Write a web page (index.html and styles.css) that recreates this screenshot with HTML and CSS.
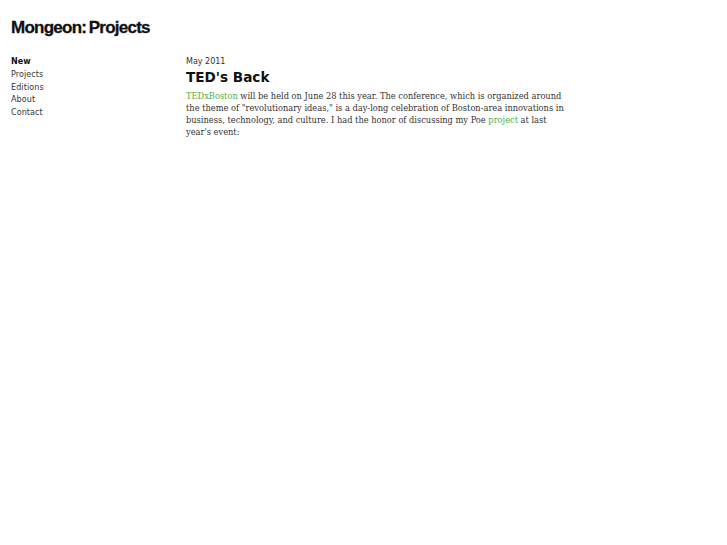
FILE: index.html
```html
<!DOCTYPE html>
<html>
<head>
<meta charset="utf-8">
<link rel="stylesheet" href="styles.css">
</head>
<body>
<header class="masthead">
  <h1 class="logo">Mongeon: Projects</h1>
</header>
<div class="layout">
  <nav class="nav">
    <a class="nav-item active" href="#">New</a>
    <a class="nav-item" href="#">Projects</a>
    <a class="nav-item" href="#">Editions</a>
    <a class="nav-item" href="#">About</a>
    <a class="nav-item" href="#">Contact</a>
  </nav>
  <main class="content">
    <div class="date">May 2011</div>
    <h2 class="title">TED's Back</h2>
    <p class="body"><a class="link" href="#">TEDxBoston</a> will be held on June 28 this year. The conference, which is organized around the theme of "revolutionary ideas," is a day-long celebration of Boston-area innovations in business, technology, and culture. I had the honor of discussing my Poe <a class="link" href="#">project</a> at last year's event:</p>
  </main>
</div>
</body>
</html>
```
FILE: styles.css
```css
html, body { margin: 0; padding: 0; background: #fff; }
body { font-family: "DejaVu Sans", sans-serif; color: #222; }
.masthead { padding: 17px 0 0 11px; height: 38px; }
.logo { margin: 0; font-family: "Liberation Sans", sans-serif; font-weight: bold; font-size: 17px; letter-spacing: -0.75px; word-spacing: -1.5px; color: #111; line-height: 22px; -webkit-text-stroke: 0.3px #111; }
.layout { display: flex; padding-left: 11px; padding-top: 1px; }
.nav { width: 175px; display: flex; flex-direction: column; font-size: 8px; line-height: 12.8px; letter-spacing: 0.1px; }
.nav-item { color: #333; text-decoration: none; }
.nav-item.active { font-weight: bold; color: #111; }
.content { width: 383px; }
.date { font-size: 8px; line-height: 12px; color: #333; }
.title { margin: 0 0 3px; font-size: 13.6px; font-weight: bold; line-height: 19px; color: #111; }
.body { margin: 0; font-family: "DejaVu Serif Condensed", "DejaVu Serif", serif; font-size: 9.2px; line-height: 12px; color: #333; }
.link { color: #52ad46; text-decoration: none; }
```
